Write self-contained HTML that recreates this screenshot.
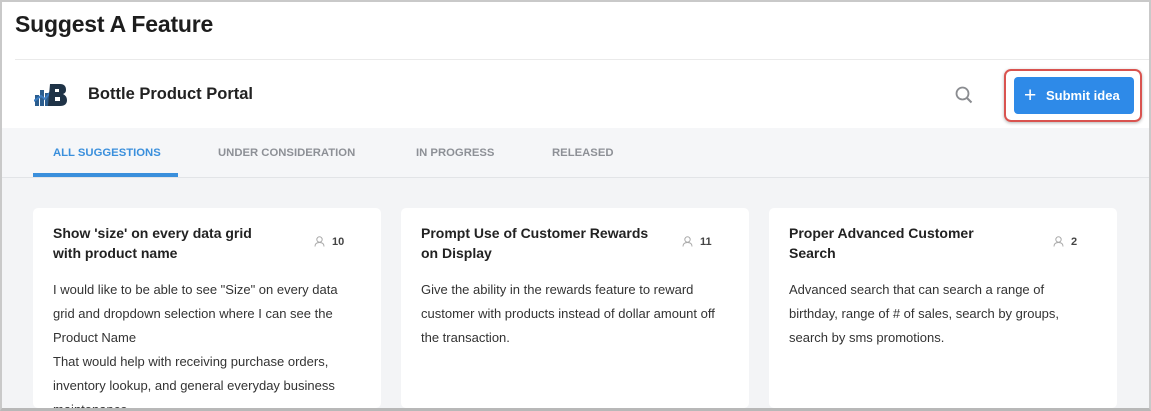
<!DOCTYPE html>
<html><head><style>
*{margin:0;padding:0;box-sizing:border-box}
html,body{width:1151px;height:411px;overflow:hidden;background:#fff;font-family:"Liberation Sans",sans-serif}
.frame{position:absolute;left:0;top:0;width:1151px;height:411px;border:2px solid #c9c9c9;border-bottom:3px solid #b8b8b8}
h1{position:absolute;left:15px;top:11px;font-size:23px;font-weight:bold;color:#1d1d1d;letter-spacing:-.2px}
.hr{position:absolute;left:15px;right:2px;top:59px;height:1px;background:#eaeaea}
.title{position:absolute;left:88px;top:85px;font-size:16.5px;font-weight:bold;color:#222}
.tabs{position:absolute;left:2px;right:2px;top:128px;height:50px;background:#f5f6f8;border-bottom:1px solid #e2e4e7}
.tab{position:absolute;top:19px;font-size:11.3px;font-weight:bold;color:#8d9096}
.tab.a{color:#3a8fdc}
.ul{position:absolute;left:31px;top:45px;width:145px;height:4px;background:#3a8fdc}
.main{position:absolute;left:2px;right:2px;top:178px;bottom:3px;background:#f3f4f6;overflow:hidden}
.card{position:absolute;top:30px;width:348px;height:200px;background:#fff;border-radius:5px;overflow:hidden}
.card h3{position:absolute;left:20px;top:15px;width:240px;font-size:14px;line-height:20px;color:#222;font-weight:bold}
.card .v{position:absolute;left:281px;top:28px;font-size:11px;font-weight:bold;color:#444}
.card .v svg{vertical-align:-2px;margin-right:7px}
.card p{position:absolute;left:20px;top:70px;width:300px;font-size:13px;line-height:24px;color:#333}
.btn{position:absolute;left:1004px;top:69px;width:138px;height:53px;border:2px solid #d9534f;border-radius:7px;box-shadow:0 1px 3px rgba(0,0,0,.3)}
.btn div{position:absolute;left:8px;top:6px;width:120px;height:37px;background:#2e8ae8;border-radius:4px;color:#fff;font-size:13px;font-weight:bold;line-height:37px;padding-left:32px}
.btn span{position:absolute;left:10px;top:0;font-size:21px;font-weight:normal}
</style></head><body>
<h1>Suggest A Feature</h1>
<div class="hr"></div>
<svg style="position:absolute;left:34px;top:81px" width="34" height="26" viewBox="0 0 34 26">
<rect x="1" y="14" width="4" height="11" fill="#2b5d8e"/><rect x="6" y="9" width="4" height="16" fill="#2b5d8e"/><rect x="11" y="12" width="4" height="13" fill="#2b5d8e"/>
<path d="M0 20 L7 15 L11 18 L18 9" stroke="#3b7bc0" stroke-width="2" fill="none"/>
<path d="M16 3 H26 Q32 3 32 9 Q32 12 29 13 Q33 15 33 19 Q33 25 26 25 H14 Z" fill="#1f3347"/>
<rect x="21" y="8" width="4" height="3" fill="#fff"/><rect x="21" y="16" width="5" height="4" fill="#fff"/>
</svg>
<div class="title">Bottle Product Portal</div>
<svg style="position:absolute;left:955px;top:86px" width="18" height="18" viewBox="0 0 18 18"><circle cx="7.5" cy="7.5" r="6" stroke="#8a8c90" stroke-width="1.8" fill="none"/><path d="M12 12 L16.5 16.5" stroke="#8a8c90" stroke-width="2"/></svg>
<div class="btn"><div><span>+</span>Submit idea</div></div>
<div class="tabs">
<div class="tab a" style="left:51px">ALL SUGGESTIONS</div>
<div class="tab" style="left:216px">UNDER CONSIDERATION</div>
<div class="tab" style="left:414px">IN PROGRESS</div>
<div class="tab" style="left:550px">RELEASED</div>
<div class="ul"></div>
</div>
<div class="main">
<div class="card" style="left:31px"><h3>Show 'size' on every data grid<br>with product name</h3><div class="v"><svg width="11" height="11" viewBox="0 0 11 11"><circle cx="5.5" cy="3.5" r="2.7" stroke="#aaa" fill="none"/><path d="M1 10.5 Q1 6.5 5.5 6.5 Q10 6.5 10 10.5" stroke="#aaa" fill="none"/></svg>10</div>
<p>I would like to be able to see "Size" on every data grid and dropdown selection where I can see the Product Name<br>That would help with receiving purchase orders, inventory lookup, and general everyday business maintenance.</p></div>
<div class="card" style="left:399px"><h3>Prompt Use of Customer Rewards on Display</h3><div class="v"><svg width="11" height="11" viewBox="0 0 11 11"><circle cx="5.5" cy="3.5" r="2.7" stroke="#aaa" fill="none"/><path d="M1 10.5 Q1 6.5 5.5 6.5 Q10 6.5 10 10.5" stroke="#aaa" fill="none"/></svg>11</div>
<p>Give the ability in the rewards feature to reward customer with products instead of dollar amount off the transaction.</p></div>
<div class="card" style="left:767px"><h3>Proper Advanced Customer<br>Search</h3><div class="v" style="left:284px"><svg width="11" height="11" viewBox="0 0 11 11"><circle cx="5.5" cy="3.5" r="2.7" stroke="#aaa" fill="none"/><path d="M1 10.5 Q1 6.5 5.5 6.5 Q10 6.5 10 10.5" stroke="#aaa" fill="none"/></svg>2</div>
<p>Advanced search that can search a range of birthday, range of # of sales, search by groups, search by sms promotions.</p></div>
</div>
<div class="frame"></div>
</body></html>
